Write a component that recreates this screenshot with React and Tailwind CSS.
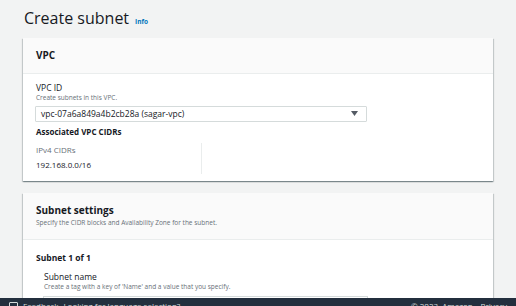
import React from 'react';

const font = { fontFamily: '"Open Sans", "Noto Sans", sans-serif' };

const Card = ({ children }) => (
  <div className="bg-white shadow-[0_1px_1px_0_rgba(0,28,36,0.3),1px_1px_1px_0_rgba(0,28,36,0.15),-1px_1px_1px_0_rgba(0,28,36,0.15)]">
    {children}
  </div>
);

const App = () => {
  return (
    <div
      className="relative h-[306px] w-[516px] overflow-hidden bg-[#f2f3f3] text-[#16191f] font-['Open_Sans',_'Noto_Sans',_sans-serif]"
      style={font}
    >
      <div className="px-[23px] pt-[8px]">
        {/* Title */}
        <div className="flex items-baseline gap-[6px] h-[20px] pl-[1px]">
          <h1 className="text-[16px] leading-[20px] font-normal">Create subnet</h1>
          <span className="text-[6.5px] font-bold text-[#0073bb]">Info</span>
        </div>

        {/* VPC card */}
        <div className="mt-[10px]">
          <Card>
            <div className="h-[36px] flex items-center px-[13px] bg-[#fafafa] border-b border-[#eaeded]">
              <h2 className="text-[10px] font-bold">VPC</h2>
            </div>
            <div className="px-[13px] pt-[8px] pb-[7px]">
              <div className="text-[8.5px] leading-[11px]">VPC ID</div>
              <div className="text-[6.5px] leading-[9px] text-[#687078]">Create subnets in this VPC.</div>
              <div className="mt-[3.5px] w-[332px] h-[16px] -ml-[1px] border border-[#d5dbdb] rounded-[1px] flex items-center justify-between pl-[5px] pr-[8px]">
                <span className="text-[8.5px] leading-[11px]">vpc-07a6a849a4b2cb28a (sagar-vpc)</span>
                <svg width="7" height="5" viewBox="0 0 7 5">
                  <path d="M0 0 H7 L3.5 5 Z" fill="#545b64" />
                </svg>
              </div>
              <div className="mt-[4.5px] text-[8px] leading-[11px] font-bold">Associated VPC CIDRs</div>
              <div className="mt-[6px] grid grid-cols-[165px_1fr]">
                <div className="pt-[0.5px] pb-[4px]">
                  <div className="text-[8px] leading-[11px] text-[#687078]">IPv4 CIDRs</div>
                  <div className="mt-[4px] text-[8px] leading-[11px]">192.168.0.0/16</div>
                </div>
                <div className="border-l border-[#eaeded]" />
              </div>
            </div>
          </Card>
        </div>

        {/* Subnet settings card */}
        <div className="mt-[12px]">
          <Card>
            <div className="h-[47px] px-[13px] pt-[11.5px] bg-[#fafafa] border-b border-[#eaeded]">
              <h2 className="text-[10px] leading-[13px] font-bold">Subnet settings</h2>
              <p className="mt-[1px] text-[6.5px] leading-[9px] text-[#687078]">
                Specify the CIDR blocks and Availability Zone for the subnet.
              </p>
            </div>
            <div className="px-[13px] pt-[12px] pb-[20px]">
              <h3 className="text-[8.5px] leading-[12px] font-bold">Subnet 1 of 1</h3>
              <div className="pl-[8px] mt-[7.5px]">
                <div className="text-[8.5px] leading-[11px]">Subnet name</div>
                <div className="text-[6.5px] leading-[9px] text-[#687078]">
                  Create a tag with a key of 'Name' and a value that you specify.
                </div>
                <div className="mt-[4.5px] -ml-[1px] w-[325px] h-[16px] border border-[#d5dbdb]" />
              </div>
            </div>
          </Card>
        </div>
      </div>

      {/* Console footer */}
      <div className="absolute left-0 right-0 bottom-0 h-[8px] bg-[#232f3e] overflow-hidden">
        <div className="flex items-start justify-between px-[9px] pt-[3px] text-[8px] leading-[10px] text-[#d5dbdb]">
          <div className="flex items-center gap-[5px]">
            <span className="inline-block w-[9px] h-[8px] border border-[#d5dbdb] rounded-[1px]" />
            <span>Feedback</span>
            <span>Looking for language selection?</span>
          </div>
          <div className="flex gap-[8px]">
            <span>© 2023, Amazon</span>
            <span>Privacy</span>
          </div>
        </div>
      </div>
    </div>
  );
};

export default App;
